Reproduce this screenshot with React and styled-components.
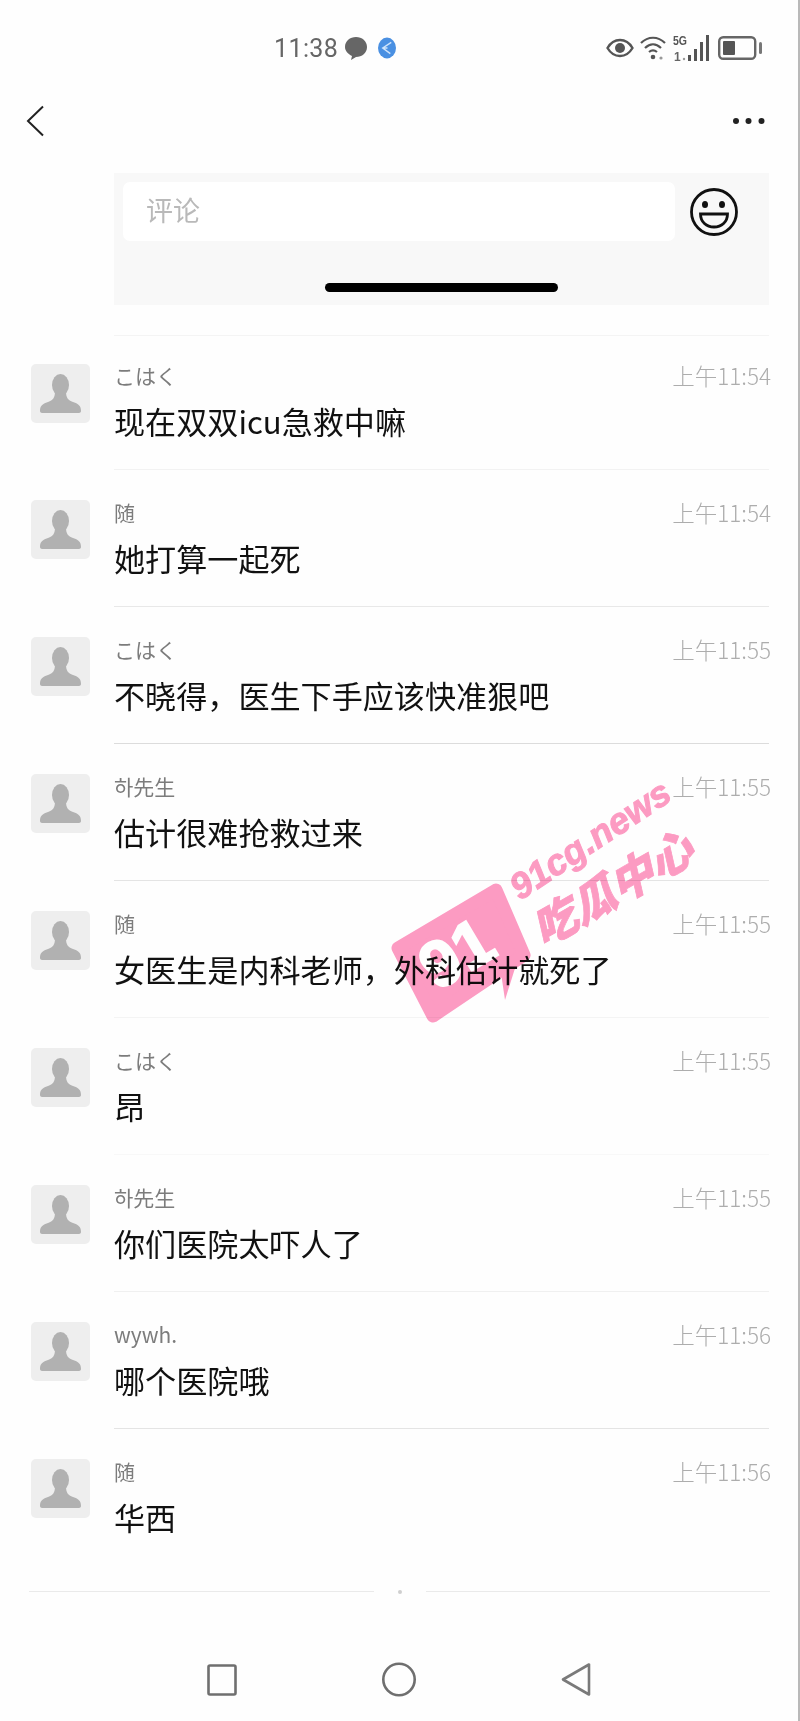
import React from "react";
import styled, { createGlobalStyle } from "styled-components";

const Global = createGlobalStyle`
  html, body { margin: 0; padding: 0; background: #fff; }
  body { font-family: "Noto Sans CJK SC", "Noto Sans", sans-serif; }
`;

const Page = styled.div`
  position: relative;
  box-sizing: border-box;
  width: 800px;
  height: 1721px;
  overflow: hidden;
  background: #fefefe;
  border-right: 2px solid #b9b9b9;
  filter: blur(0.45px);
  display: flex;
  flex-direction: column;
`;

const StatusBar = styled.div`
  height: 96px;
  flex: none;
  display: flex;
  align-items: center;
  padding: 0 36px 0 274px;
`;
const Clock = styled.span`
  font-family: "Roboto", sans-serif;
  font-size: 25px;
  color: #666;
  letter-spacing: 0.4px;
  margin-right: 7px;
`;
const StatusGap = styled.div`
  width: 11px;
`;
const StatusRight = styled.div`
  margin-left: auto;
  display: flex;
  align-items: center;
  gap: 6px;
`;
const BatterySlot = styled.div`
  display: flex;
  margin-left: 2px;
`;

const Header = styled.div`
  height: 50px;
  flex: none;
  display: flex;
  align-items: center;
  justify-content: space-between;
  padding: 0 32px 0 26px;
`;

const Panel = styled.div`
  flex: none;
  box-sizing: border-box;
  height: 132px;
  margin: 27px 29px 30px 114px;
  background: #f8f8f8;
  padding: 9px 9px 13px 9px;
  display: flex;
  flex-direction: column;
`;
const InputRow = styled.div`
  display: flex;
  align-items: center;
  gap: 14px;
`;
const Input = styled.div`
  width: 552px;
  height: 59px;
  box-sizing: border-box;
  background: #fff;
  border-radius: 7px;
  padding-left: 23px;
  font-size: 27px;
  line-height: 55px;
  color: #b9b9b9;
`;
const HomeBar = styled.div`
  width: 233px;
  height: 9px;
  border-radius: 5px;
  background: #000;
  margin: auto 0 0 202px;
`;

const List = styled.div`
  flex: none;
  display: flex;
  flex-direction: column;
`;
const Row = styled.div`
  display: flex;
  height: ${(p) => (p.$first ? 134 : 137)}px;
  padding: 0 29px 0 31px;
`;
const Avatar = styled.div`
  flex: none;
  width: 59px;
  height: 59px;
  margin-top: ${(p) => (p.$first ? 29 : 31)}px;
  border-radius: 5px;
  background: #eeeeee;
`;
const Content = styled.div`
  flex: 1;
  min-width: 0;
  margin-left: 24px;
  box-sizing: border-box;
  border-top: 1px solid ${(p) => p.$line};
  padding-top: ${(p) => (p.$first ? 25 : 28)}px;
`;
const Meta = styled.div`
  display: flex;
  justify-content: space-between;
  align-items: center;
  height: 28px;
`;
const Name = styled.span`
  font-size: 21px;
  color: #7c7c7c;
`;
const Time = styled.span`
  font-size: 22.5px;
  color: #adadad;
  font-weight: 300;
  margin-right: -2px;
`;
const Body = styled.div`
  margin-top: 13px;
  font-size: 31.1px;
  line-height: 38px;
  color: #111;
  white-space: nowrap;
`;

const EndRule = styled.div`
  flex: none;
  margin: 26px 28px 0 29px;
  display: flex;
  align-items: center;
  height: 1px;
`;
const RuleLine = styled.div`
  flex: 1;
  height: 1px;
  background: #eaeaea;
`;
const RuleDot = styled.div`
  width: 4px;
  height: 4px;
  margin: 0 24px;
  border-radius: 50%;
  background: #cfcfcf;
`;

const NavBar = styled.div`
  flex: none;
  margin-top: 70px;
  display: flex;
  align-items: center;
  justify-content: center;
  gap: 145px;
`;

const Watermark = styled.svg`
  position: absolute;
  left: 370px;
  top: 750px;
  mix-blend-mode: multiply;
`;

const rows = [
  { name: "こはく", time: "上午11:54", text: "现在双双icu急救中嘛", line: "#f4f4f4" },
  { name: "随", time: "上午11:54", text: "她打算一起死", line: "#f2f2f2" },
  { name: "こはく", time: "上午11:55", text: "不晓得，医生下手应该快准狠吧", line: "#e8e8e8" },
  { name: "하先生", time: "上午11:55", text: "估计很难抢救过来", line: "#dcdcdc" },
  { name: "随", time: "上午11:55", text: "女医生是内科老师，外科估计就死了", line: "#e4e4e4" },
  { name: "こはく", time: "上午11:55", text: "昂", line: "#f4f4f4" },
  { name: "하先生", time: "上午11:55", text: "你们医院太吓人了", line: "#f8f8f8" },
  { name: "wywh.", time: "上午11:56", text: "哪个医院哦", line: "#f0f0f0" },
  { name: "随", time: "上午11:56", text: "华西", line: "#e4e4e4" },
];

const Silhouette = () => (
  <svg width="59" height="59" viewBox="0 0 59 59">
    <ellipse cx="29.5" cy="21" rx="8.5" ry="11" fill="#b1b1b1" />
    <path d="M9 47c0-5 2-7 8-9 5-2 7-4 7-11h11c0 7 2 9 7 11 6 2 8 4 8 9 0 1-1 2-2 2H11c-1 0-2-1-2-2z" fill="#b1b1b1" />
  </svg>
);

const ChatBubble = () => (
  <svg width="22" height="24" viewBox="0 0 22 24">
    <path d="M11 1c6 0 11 4 11 10s-5 10-11 10l-5 3 1-4C3 18 0 15 0 11 0 5 5 1 11 1z" fill="#666" />
  </svg>
);
const Globe = () => (
  <svg width="18" height="24" viewBox="0 0 19 24">
    <ellipse cx="9.5" cy="12" rx="9.5" ry="11" fill="#4a90e2" />
    <path d="M14 6 5 12l8 6M5 12h5" stroke="#cfe4fb" strokeWidth="1.5" fill="none" />
  </svg>
);
const Eye = () => (
  <svg width="28" height="20" viewBox="0 0 28 20">
    <path d="M1.5 10C5 4 9 2 14 2s9 2 12.5 8C23 16 19 18 14 18S5 16 1.5 10z" fill="none" stroke="#555" strokeWidth="2.4" />
    <circle cx="14" cy="10" r="5" fill="#555" />
  </svg>
);
const Wifi = () => (
  <svg width="27" height="26" viewBox="0 0 27 26">
    <g fill="none" stroke="#555" strokeWidth="2.2">
      <path d="M1 8c7-7 17-7 24 0" />
      <path d="M5 13c5-5 11-5 16 0" />
      <path d="M9 17c3-2.500 5-2.500 8 0" />
    </g>
    <circle cx="13" cy="22" r="2.300" fill="#555" />
    <circle cx="21" cy="23" r="1.600" fill="#999" />
  </svg>
);
const Signal = () => (
  <svg width="37" height="30" viewBox="0 0 37 30">
    <text x="0" y="12" fontFamily="Liberation Sans, sans-serif" fontWeight="700" fontSize="13" textLength="14" lengthAdjust="spacingAndGlyphs" fill="#555">5G</text>
    <text x="1" y="28" fontFamily="Liberation Sans, sans-serif" fontWeight="700" fontSize="12" fill="#666">1</text>
    <circle cx="11" cy="26" r="1.200" fill="#999" />
    <g fill="#555">
      <rect x="15" y="22" width="3" height="6" />
      <rect x="21" y="16" width="3" height="12" />
      <rect x="27" y="9" width="3" height="19" />
      <rect x="33" y="2" width="3" height="26" />
    </g>
  </svg>
);
const Battery = () => (
  <svg width="44" height="24" viewBox="0 0 44 24">
    <rect x="1.200" y="1.200" width="36" height="21.500" rx="4" fill="none" stroke="#666" strokeWidth="2.400" />
    <rect x="5" y="5" width="12" height="14" rx="1" fill="#555" />
    <rect x="41" y="6" width="3" height="12" rx="1.500" fill="#777" />
  </svg>
);
const Back = () => (
  <svg width="20" height="32" viewBox="0 0 20 32">
    <path d="M17 1.500 2 16l15 14.500" fill="none" stroke="#222" strokeWidth="2" />
  </svg>
);
const Dots = () => (
  <svg width="34" height="8" viewBox="0 0 34 8" fill="#222">
    <circle cx="4" cy="4" r="3" />
    <circle cx="16.500" cy="4" r="3" />
    <circle cx="29.500" cy="4" r="3" />
  </svg>
);
const Smile = () => (
  <svg width="50" height="50" viewBox="0 0 50 50">
    <circle cx="25" cy="25" r="22.500" fill="none" stroke="#111" strokeWidth="2.800" />
    <ellipse cx="16" cy="17.500" rx="3" ry="3.500" fill="#111" />
    <ellipse cx="33" cy="17.500" rx="3" ry="3.500" fill="#111" />
    <path d="M11.500 27h27c0 8-6 13-13.500 13S11.500 35 11.500 27z" fill="none" stroke="#111" strokeWidth="2.800" />
  </svg>
);
const NavSquare = () => (
  <svg width="30" height="32" viewBox="0 0 30 32">
    <rect x="1.500" y="1.500" width="27" height="29" rx="1.500" fill="none" stroke="#6f6f6f" strokeWidth="2.600" />
  </svg>
);
const NavCircle = () => (
  <svg width="34" height="35" viewBox="0 0 34 35">
    <circle cx="17" cy="17.500" r="15.700" fill="none" stroke="#6f6f6f" strokeWidth="2.600" />
  </svg>
);
const NavBack = () => (
  <svg width="30" height="35" viewBox="0 0 30 35">
    <path d="M28 2.500v30L2 17.500z" fill="none" stroke="#7a7a7a" strokeWidth="2.600" strokeLinejoin="round" />
  </svg>
);

const pink = "#fd9cc3";

const Logo = () => (
  <Watermark width="350" height="280" viewBox="0 0 350 280">
    <path d="M126 140 28 198 63 266 154 205z" fill={pink} stroke={pink} strokeWidth="13" strokeLinejoin="round" />
    <path d="M147 212 135 250 131 223z" fill={pink} />
    <text transform="translate(88 202) rotate(-31)" x="-2" y="23" textAnchor="middle" fontFamily="Liberation Sans, sans-serif" fontWeight="700" fontSize="66" stroke="#fff" strokeWidth="2" fill="#fff">91</text>
    <text transform="translate(150 151) rotate(-33.500)" fontFamily="Liberation Sans, sans-serif" fontWeight="700" fontStyle="italic" fontSize="36.5" stroke={pink} strokeWidth="1" fill={pink}>91cg.news</text>
    <text transform="translate(173 198) rotate(-30) skewX(-17)" fontFamily="Noto Sans CJK SC, sans-serif" fontWeight="900" fontSize="44.5" stroke={pink} strokeWidth="0.8" fill={pink}>吃瓜中心</text>
  </Watermark>
);

export default function App() {
  return (
    <>
      <Global />
      <Page>
        <StatusBar>
          <Clock>11:38</Clock>
          <ChatBubble />
          <StatusGap />
          <Globe />
          <StatusRight>
            <Eye />
            <Wifi />
            <Signal />
            <BatterySlot>
              <Battery />
            </BatterySlot>
          </StatusRight>
        </StatusBar>
        <Header>
          <Back />
          <Dots />
        </Header>
        <Panel>
          <InputRow>
            <Input>评论</Input>
            <Smile />
          </InputRow>
          <HomeBar />
        </Panel>
        <List>
          {rows.map((r, i) => (
            <Row key={i} $first={i === 0}>
              <Avatar $first={i === 0}>
                <Silhouette />
              </Avatar>
              <Content $first={i === 0} $line={r.line}>
                <Meta>
                  <Name>{r.name}</Name>
                  <Time>{r.time}</Time>
                </Meta>
                <Body>{r.text}</Body>
              </Content>
            </Row>
          ))}
        </List>
        <EndRule>
          <RuleLine />
          <RuleDot />
          <RuleLine />
        </EndRule>
        <NavBar>
          <NavSquare />
          <NavCircle />
          <NavBack />
        </NavBar>
        <Logo />
      </Page>
    </>
  );
}
